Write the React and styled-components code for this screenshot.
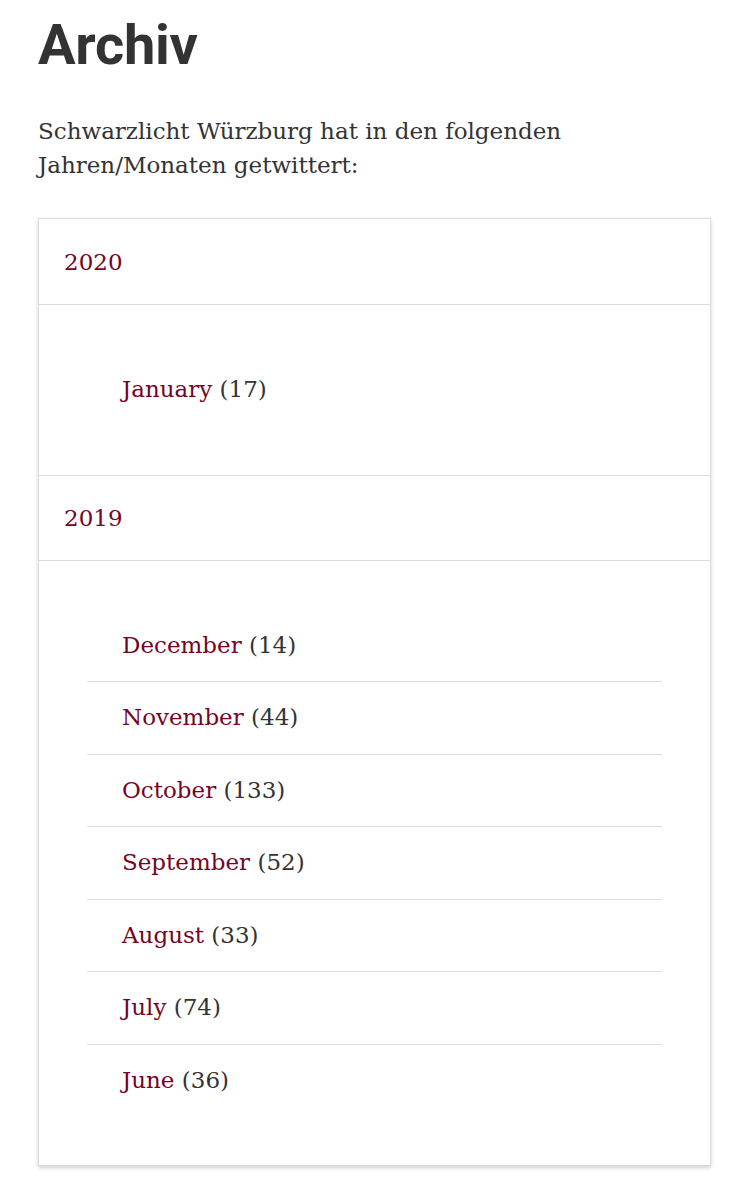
import React from "react";
import styled, { createGlobalStyle } from "styled-components";

const Global = createGlobalStyle`
  html, body { margin: 0; padding: 0; background: #fff; }
  body { font-family: "DejaVu Serif", "Liberation Serif", serif; color: #333; }
`;

const Page = styled.main`
  padding: 0 38px 40px 38px;
`;

const Title = styled.h1`
  margin: 0;
  padding-top: 13px;
  font-family: Roboto, "Liberation Sans", sans-serif;
  font-weight: 700;
  font-size: 56px;
  line-height: 64px;
  color: #333;
  letter-spacing: -0.3px;
`;

const Intro = styled.p`
  margin: 37px 0 0 0;
  font-size: 23px;
  line-height: 34px;
  color: #333;
`;

const Card = styled.section`
  margin-top: 36px;
  width: 673px;
  box-sizing: border-box;
  background: #fff;
  border: 1px solid #dcdcdc;
  box-shadow: 0 2px 4px rgba(0, 0, 0, 0.18);
`;

const YearHeader = styled.div`
  height: 86px;
  box-sizing: border-box;
  padding: 0 25px;
  display: flex;
  align-items: center;
  border-top: ${(p) => (p.$first ? "none" : "1px solid #dcdcdc")};
  border-bottom: 1px solid #dcdcdc;
`;

const Link = styled.a`
  color: #760424;
  text-decoration: none;
  font-size: 23px;
`;

const Panel = styled.div`
  padding: 49px 48px;
`;

const MonthList = styled.ul`
  list-style: none;
  margin: 0;
  padding: 0;
`;

const Month = styled.li`
  padding: 18px 35px;
  line-height: 35.5px;
  font-size: 23px;
  border-top: ${(p) => (p.$first ? "none" : "1px solid #dcdcdc")};
`;

const Count = styled.span`
  color: #333;
`;

const data = [
  { year: "2020", months: [["January", 17]] },
  {
    year: "2019",
    months: [
      ["December", 14],
      ["November", 44],
      ["October", 133],
      ["September", 52],
      ["August", 33],
      ["July", 74],
      ["June", 36],
    ],
  },
];

export default function App() {
  return (
    <>
      <Global />
      <Page>
        <Title>Archiv</Title>
        <Intro>
          Schwarzlicht Würzburg hat in den folgenden
          <br />
          Jahren/Monaten getwittert:
        </Intro>
        <Card>
          {data.map((y, yi) => (
            <React.Fragment key={y.year}>
              <YearHeader $first={yi === 0}>
                <Link href="#">{y.year}</Link>
              </YearHeader>
              <Panel>
                <MonthList>
                  {y.months.map(([m, c], i) => (
                    <Month key={m} $first={i === 0}>
                      <Link href="#">{m}</Link> <Count>({c})</Count>
                    </Month>
                  ))}
                </MonthList>
              </Panel>
            </React.Fragment>
          ))}
        </Card>
      </Page>
    </>
  );
}
